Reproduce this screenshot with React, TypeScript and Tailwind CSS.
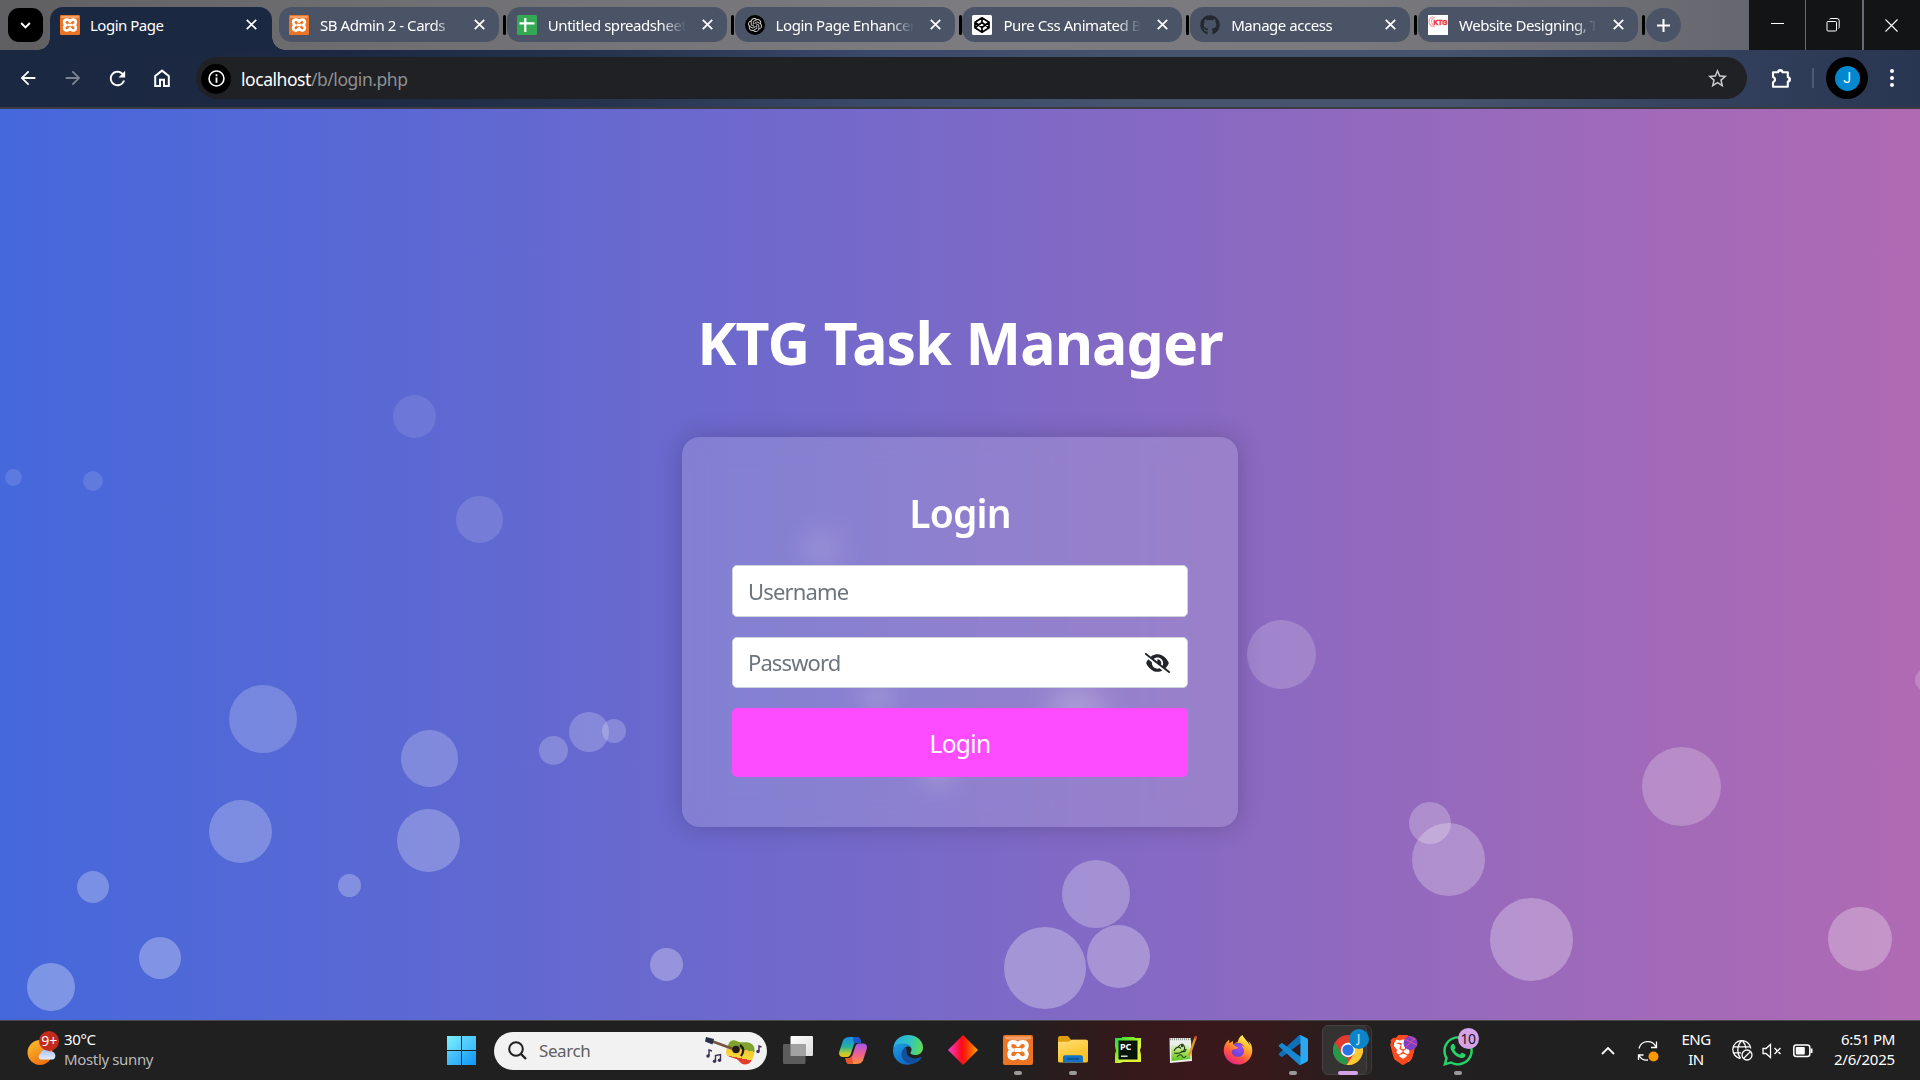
import React from "react";
import { FaGithub, FaWhatsapp, FaFirefoxBrowser } from "react-icons/fa";
import { FaEyeSlash } from "react-icons/fa6";
import { SiOpenai, SiBrave } from "react-icons/si";
import { MdArrowBack, MdArrowForward, MdRefresh, MdStarBorder } from "react-icons/md";

type Bubble = [x: number, y: number, d: number];

const bubbles: Bubble[] = [
  [414.5, 416, 43], [13.5, 477.5, 17], [93, 480.5, 20], [479.5, 519.5, 47],
  [263, 719, 68], [429.5, 758.5, 57], [553.5, 750.5, 29], [589, 731.5, 40],
  [614, 731, 24], [240.5, 831.5, 63], [428.5, 840.5, 63], [93, 887, 32],
  [349.5, 885.5, 23], [160, 958, 42], [51, 987, 48], [666, 964.5, 33],
  [1281.5, 654.5, 69], [1681.5, 786.5, 79], [1430, 823, 42], [1448.5, 859.5, 73],
  [1531.5, 939.5, 83], [1860, 939, 64], [1926, 680, 22], [1096, 894, 68],
  [1118.5, 956.5, 63], [1045, 968, 82], [821, 549, 36], [877, 697, 30],
  [1077, 713, 58], [938, 771, 30],
];

function Xampp({ className }: { className: string }) {
  return (
    <svg viewBox="0 0 30 30" className={className}>
      <rect width="30" height="30" rx="2" fill="#ec7525" />
      <path d="M2 1.500h26v2.500q-13 2-26 0z" fill="#f3a06a" />
      <path
        d="M15 10C13 5.500 6 6 6.300 11c.1 2 1.200 3.400 3 4-2 .8-3.200 2.400-3 4.500C6.600 24.500 13 24.500 15 20c2 4.500 8.400 4.500 8.700-.5.200-2.100-1-3.700-3-4.500 1.800-.6 2.900-2 3-4C24 6 17 5.500 15 10zM11.500 15h7"
        fill="none"
        stroke="#fff"
        strokeWidth="4"
        strokeLinejoin="round"
      />
    </svg>
  );
}

function SheetIcon() {
  return (
    <svg viewBox="0 0 20 20" className="size-5">
      <rect width="20" height="20" rx="1.5" fill="#34a853" />
      <path d="M2.5 8.3h15M8.3 3v14" stroke="#fff" strokeWidth="2.2" />
    </svg>
  );
}

function CodepenIcon() {
  return (
    <svg viewBox="0 0 20 20" className="size-5">
      <rect width="20" height="20" rx="1.500" fill="#fff" />
      <path
        d="M10 2.800l7 4.500v5.400l-7 4.500-7-4.500V7.300zM10 2.800v4.700M10 12.500v4.700M3 7.300l7 5.200 7-5.200M3 12.700l7-5.200 7 5.200"
        fill="none"
        stroke="#000"
        strokeWidth="1.700"
        strokeLinejoin="round"
      />
    </svg>
  );
}

function KtgIcon() {
  return (
    <svg viewBox="0 0 20 20" className="size-5">
      <rect width="20" height="20" fill="#fff" />
      <path d="M5 1.5Q1 3 1 6.500T5 12M7 2Q3 4 3.500 7T7 12" stroke="#f9a9a9" strokeWidth="1.300" fill="none" />
      <text x="5.500" y="10" fontSize="8" fontWeight="900" fill="#f2323a" stroke="#f2323a" strokeWidth=".5" fontFamily="Liberation Sans, sans-serif" textLength="14" lengthAdjust="spacingAndGlyphs">KTG</text>
    </svg>
  );
}

const tabs: { title: string; icon: React.ReactNode }[] = [
  { title: "SB Admin 2 - Cards", icon: <Xampp className="size-5" /> },
  { title: "Untitled spreadsheet", icon: <SheetIcon /> },
  {
    title: "Login Page Enhancement",
    icon: (
      <span className="flex size-5 items-center justify-center rounded-full bg-black">
        <SiOpenai className="size-[14px] text-[#d5d5d5]" />
      </span>
    ),
  },
  { title: "Pure Css Animated Background", icon: <CodepenIcon /> },
  { title: "Manage access", icon: <FaGithub className="size-5 text-[#24292f]" /> },
  { title: "Website Designing, Training", icon: <KtgIcon /> },
];

function Cross() {
  return (
    <svg viewBox="0 0 10 10" className="size-[11px] shrink-0">
      <path d="M.7.7l8.600 8.600M9.300.7L.7 9.300" stroke="#fff" strokeWidth="1.600" />
    </svg>
  );
}

function TabStrip() {
  return (
    <div className="flex h-[50px] bg-[linear-gradient(90deg,#5f5e61_0%,#6c6b6e_15%,#747377_30%,#7c7b80_50%,#7a797e_70%,#6d6e74_85%,#65676e_91%)]">
      <div className="flex w-[50px] pl-2 pt-2">
        <button className="flex h-[34px] w-[35px] items-center justify-center rounded-[11px] bg-black">
          <svg viewBox="0 0 12 8" className="h-[7px] w-[11px]">
            <path d="M1 1.200l5 5 5-5" fill="none" stroke="#fff" strokeWidth="2.200" />
          </svg>
        </button>
      </div>
      <div className="relative mt-[7px] flex h-[43px] w-[222px] items-start rounded-t-[13px] bg-[#1b2841] pl-[10px] pt-2">
        <span className="absolute -left-3 bottom-0 size-3 bg-[radial-gradient(circle_at_0_0,transparent_11.500px,#1b2841_12px)]" />
        <span className="absolute -right-[13px] bottom-0 size-[13px] bg-[radial-gradient(circle_at_100%_0,transparent_12.500px,#1b2841_13px)]" />
        <Xampp className="size-5" />
        <span className="ml-[10px] w-[156px] text-[15px] leading-5 tracking-[-0.500px] text-white">Login Page</span>
        <span className="mt-1"><Cross /></span>
      </div>
      <div className="ml-[7px] flex items-start pt-[7px]">
        {tabs.map((t) => (
          <div key={t.title} className="flex w-[227.800px] items-center">
            <div className="flex h-[35px] w-[220px] items-center rounded-[13px] bg-[#4b5466] pl-[10px]">
              <span className="shrink-0">{t.icon}</span>
              <span className="ml-[11px] w-[138px] overflow-hidden whitespace-nowrap text-[15px] leading-5 tracking-[-0.450px] text-white [mask-image:linear-gradient(90deg,#000_82%,transparent)]">
                {t.title}
              </span>
              <span className="ml-[16px]"><Cross /></span>
            </div>
            <span className="ml-[4px] h-5 w-[3px] rounded-sm bg-black" />
          </div>
        ))}
      </div>
      <div className="mt-2 flex h-[34px] w-[35px] items-center justify-center rounded-full bg-[#4b5466]">
        <svg viewBox="0 0 14 14" className="size-[13px]"><path d="M7 0v14M0 7h14" stroke="#fff" strokeWidth="2.200" /></svg>
      </div>
      <div className="ml-auto flex w-[171px] gap-px bg-[#6a6c73]">
        <div className="flex w-[56px] items-center justify-center bg-[#131416]">
          <span className="mt-[-3px] h-px w-[13px] bg-white" />
        </div>
        <div className="flex w-[56px] items-center justify-center bg-[#131416] pr-[2px]">
          <svg viewBox="0 0 14 14" className="size-[14px]" fill="none" stroke="#fff">
            <rect x="1" y="3.500" width="9.500" height="9.500" rx="1" />
            <path d="M3.500 1.200Q4 .5 5 .5h6q2.200 0 2.200 2.200v6q0 1.300-.8 1.800" />
          </svg>
        </div>
        <div className="ml-px flex flex-1 items-center justify-center bg-[#131416] pr-[2px]">
          <svg viewBox="0 0 13 13" className="size-[13px]"><path d="M.5.5l12 12M12.500.5l-12 12" stroke="#fff" strokeWidth="1.100" /></svg>
        </div>
      </div>
    </div>
  );
}

function Toolbar() {
  return (
    <div className="h-[59px] border-b-2 border-[#3b3b40] bg-[linear-gradient(90deg,#1b2841_0%,#1d2944_18%,#26344f_32%,#394968_45%,#46546f_60%,#46546f_75%,#35425f_88%,#293651_100%)]">
      <div className="flex h-full items-center pb-px text-white">
        <div className="flex w-[196px] items-center">
          <MdArrowBack className="ml-[17px] size-[22px]" />
          <MdArrowForward className="ml-[23px] size-[22px] text-[#7c8392]" />
          <MdRefresh className="ml-[22px] size-[23px]" />
          <svg viewBox="0 0 16 18" className="ml-[25px] h-[18px] w-4" fill="none" stroke="#fff" strokeWidth="2">
            <path d="M1.200 7L8 1.600 14.800 7v10H10v-6.200H6V17H1.200z" />
          </svg>
        </div>
        <div className="flex h-[42px] w-[1551px] items-center rounded-full bg-[#202124] pl-[5px] pr-[18px] pt-px">
          <span className="flex size-[30px] items-center justify-center rounded-full bg-black">
            <svg viewBox="0 0 16 16" className="size-[17px]" fill="none" stroke="#fff" strokeWidth="1.500">
              <circle cx="8" cy="8" r="7" />
              <path d="M8 7v5M8 4v1.800" strokeWidth="1.700" />
            </svg>
          </span>
          <span className="ml-[10px] text-[17.500px] leading-6 tracking-[-0.450px] text-white">
            localhost<span className="text-[#8e9094]">/b/login.php</span>
          </span>
          <MdStarBorder className="ml-auto size-[23px] text-[#c9cacc]" />
        </div>
        <svg viewBox="0 0 21 21" className="ml-6 size-[21px]">
          <path d="M2 4.200h5.200a2.100 2.100 0 0 1 4.200 0h5.400v5.100a2.100 2.100 0 0 1 0 4.200v5.300H2v-4.600a2.700 2.700 0 0 0 0-5.200z" fill="none" stroke="#fff" strokeWidth="2.100" strokeLinejoin="round" />
          <path d="M7.300 3.700a2 2 0 0 1 4 0zM17.300 9.500a2 2 0 0 1 0 4z" fill="#fff" />
        </svg>
        <span className="ml-[20px] h-5 w-[2px] bg-[#4f5a72]" />
        <span className="ml-3 flex size-[42px] items-center justify-center rounded-full bg-black">
          <span className="flex size-[25px] items-center justify-center rounded-full bg-[#0288d1] pb-px font-['Roboto',sans-serif] text-[14px] leading-none">J</span>
        </span>
        <span className="ml-[22px] flex flex-col gap-[3px]">
          <i className="size-1 rounded-full bg-white" />
          <i className="size-1 rounded-full bg-white" />
          <i className="size-1 rounded-full bg-white" />
        </span>
      </div>
    </div>
  );
}

function LoginPage() {
  return (
    <main className="relative h-[911px] overflow-hidden bg-[linear-gradient(90deg,#4568dc,#b06ab3)]">
      {bubbles.map(([x, y, d]) => (
        <span
          key={`${x}-${y}`}
          className="absolute rounded-full bg-white"
          style={{ left: x - d / 2, top: y - 109 - d / 2, width: d, height: d, opacity: 0.1 + (y - 416) * 0.00035 }}
        />
      ))}
      <div className="relative flex flex-col items-center pt-[197px]">
        <h1 className="text-[59px] font-bold leading-[72px] tracking-[-0.900px] text-white">KTG Task Manager</h1>
        <form className="mt-[59px] flex h-[390px] w-[556px] flex-col rounded-[18px] bg-[#f4f4f4]/[0.17] px-[50px] pt-[52px] shadow-[0_0_25px_rgba(0,0,0,0.2)] backdrop-blur-[12px]">
          <h2 className="text-center text-[39px] font-semibold leading-[48px] tracking-[-0.800px] text-white">Login</h2>
          <input
            className="mt-[28px] h-[52px] w-full rounded-[5px] border border-[#ced4da] bg-white px-[15px] text-[22px] tracking-[-0.850px] placeholder:text-[#6c757d]"
            placeholder="Username"
          />
          <div className="mt-5 flex h-[51px] items-center rounded-[5px] border border-[#ced4da] bg-white pl-[15px] pr-[17px]">
            <input className="min-w-0 flex-1 bg-transparent text-[22px] tracking-[-0.900px] placeholder:text-[#6c757d]" placeholder="Password" />
            <FaEyeSlash className="h-5 w-[25px] text-[#212529]" />
          </div>
          <button type="button" className="mt-5 h-[69px] rounded-[5px] bg-[#fd4bff] pt-[3px] text-[24.500px] tracking-[-0.600px] text-white">
            Login
          </button>
        </form>
      </div>
    </main>
  );
}

function Weather() {
  return (
    <svg viewBox="0 0 34 36" className="-mt-1 h-9 w-[34px]">
      <defs>
        <linearGradient id="sun" x1="0" y1="0" x2=".6" y2="1"><stop stopColor="#f9c22e" /><stop offset="1" stopColor="#f0700f" /></linearGradient>
        <linearGradient id="cloud" x1="0" y1="0" x2="0" y2="1"><stop stopColor="#a9c3f5" /><stop offset="1" stopColor="#e3ecfc" /></linearGradient>
      </defs>
      <circle cx="13" cy="21.500" r="12.500" fill="url(#sun)" />
      <path d="M13 28.500a3.600 3.600 0 0 1 .5-6 5 5 0 0 1 9-1.500 4 4 0 0 1 3.500 7.500z" fill="url(#cloud)" />
      <circle cx="22" cy="10" r="10" fill="#c42b1c" />
      <text x="22.200" y="15" textAnchor="middle" fontSize="14" fill="#fff" fontFamily="Noto Sans, sans-serif">9+</text>
    </svg>
  );
}

function Guitar() {
  return (
    <svg viewBox="0 0 57 30" className="h-[30px] w-[57px]">
      <defs>
        <linearGradient id="gtr" x1=".35" y1="0" x2="0.100" y2="1">
          <stop offset=".3" stopColor="#7fa32c" /><stop offset=".3" stopColor="#f2c92e" /><stop offset=".66" stopColor="#f7d63c" /><stop offset=".66" stopColor="#e03e2d" />
        </linearGradient>
      </defs>
      <path d="M24 7c2-4 6-3 9-1.500s8 0 12 1.500c5 2 5 7 4 11.500-1 5-4 10-9 10s-5-4.500-10-6-10-3-9-7 2-6 3-8.500z" fill="url(#gtr)" />
      <path d="M5 4.500l26 9.500" stroke="#77553f" strokeWidth="2.800" />
      <path d="M1 1l8 2-1.500 5.500L0 5.500z" fill="#28304a" />
      <circle cx="31" cy="13.500" r="3.800" fill="#241c1c" />
      <path d="M35 9c4 3 4 7 1 11" stroke="#241c1c" strokeWidth="2.200" fill="none" />
      <path d="M4 20v-6l3 1M10.500 25v-5.500l5-1V24M54 15v-5l2.500 1" stroke="#3b2e52" strokeWidth="1.400" fill="none" />
      <g fill="#3b2e52"><circle cx="3" cy="20" r="1.700" /><circle cx="9.500" cy="25.300" r="1.700" /><circle cx="14.500" cy="24.300" r="1.700" /><circle cx="53" cy="15.500" r="1.700" /></g>
    </svg>
  );
}

function TaskView() {
  return (
    <svg viewBox="0 0 30 28" className="h-7 w-[30px]">
      <defs><linearGradient id="tv" x1="0" y1="0" x2="1" y2="1"><stop stopColor="#fff" /><stop offset="1" stopColor="#dcdcdc" /></linearGradient></defs>
      <rect x="7.500" y="0" width="22.500" height="20" rx="1" fill="url(#tv)" />
      <rect x="0" y="8" width="22.500" height="20" rx="1" fill="#5c5c5c" />
      <rect x="7.500" y="8" width="15" height="12" fill="#a2a2a2" />
    </svg>
  );
}

function Copilot() {
  return (
    <svg viewBox="0 0 28 27" className="h-[27px] w-7">
      <defs>
        <linearGradient id="cpa" x1="0" y1="0" x2="0" y2="1"><stop stopColor="#1a8fe8" /><stop offset=".5" stopColor="#25b39a" /><stop offset=".8" stopColor="#b7cc33" /><stop offset="1" stopColor="#f3c315" /></linearGradient>
        <linearGradient id="cpb" x1="0" y1="0" x2="0" y2="1"><stop stopColor="#a457ef" /><stop offset=".5" stopColor="#ee5f94" /><stop offset="1" stopColor="#fb8f3c" /></linearGradient>
      </defs>
      <path d="M11 0h7q2.500 0 3.300 2.500l.9 3H18q-2.500 0-3.300 2.600l-3 9Q10.800 20 8 20H4Q-.8 20 .3 14.500L4 3.500Q5.500 0 11 0z" fill="url(#cpa)" />
      <path d="M14 0h4q2.500 0 3.300 2.500l.9 3H18q-2 0-3 2z" fill="#1d55cf" />
      <path d="M17 27h-6.500q-2.500 0-3.300-2.500L6.300 21H10q2.500 0 3.300-2.600l3-9Q17.200 6.500 20 6.500h4q4.800 0 3.700 5.500L24 23.500Q22.500 27 17 27z" fill="url(#cpb)" />
      <path d="M14 27h-3.500q-2.500 0-3.300-2.500L6.300 21H10q2 0 3-2z" fill="#e9572e" />
    </svg>
  );
}

function EdgeLogo() {
  return (
    <svg viewBox="0 0 30 30" className="size-[30px]">
      <defs>
        <linearGradient id="ea" x1="0" y1=".3" x2="1" y2=".5"><stop stopColor="#2aa9e6" /><stop offset=".55" stopColor="#2fc5c0" /><stop offset="1" stopColor="#62dc55" /></linearGradient>
        <linearGradient id="eb" x1="0" y1="0" x2=".6" y2="1"><stop stopColor="#1b9de2" /><stop offset="1" stopColor="#1167c4" /></linearGradient>
      </defs>
      <path d="M.3 13C1 5 7.500 0 15 0c9 0 15 6 15 12.500 0 5-3.500 7.500-7.500 7.500-3.500 0-5.500-1.400-5-2.500.8-1 1-2 1-3 0-3-3-5.500-7-5.500-5 0-9 2-11.200 4z" fill="url(#ea)" />
      <path d="M0 15C.3 11 5 8.500 10.500 8.500c4.500 0 8 2.500 8 6 0-2-2-3.300-4-3-3 .5-5 4-4.300 8C11.500 25 17 27.500 24 25.500 20 29.500 15 30.500 10.500 29.300 4 27.500 0 22 0 15z" fill="url(#eb)" />
      <path d="M12.500 12.300c-4 2.500-5.500 8-2 12.500s10 5 14.500 2c1.700-1.200 3-2.700 3.600-4 .3-.7-.2-1-.8-.7-5.500 2.800-13 1.200-14-4.600-.3-2 0-3.700-1.300-5.200z" fill="#124f9c" />
    </svg>
  );
}

function Diamond() {
  return (
    <svg viewBox="0 0 30 30" className="size-[30px]">
      <defs><linearGradient id="dm"><stop stopColor="#f63fd0" /><stop offset=".45" stopColor="#fb0a1c" /><stop offset=".6" stopColor="#fc2a05" /><stop offset="1" stopColor="#fda305" /></linearGradient></defs>
      <path d="M15 0l15 15-15 15L0 15z" fill="url(#dm)" />
    </svg>
  );
}

function Folder() {
  return (
    <svg viewBox="0 0 30 28" className="-mt-px h-[27px] w-[30px]" preserveAspectRatio="none">
      <defs><linearGradient id="fd" x1="0" y1="0" x2="0.500" y2="1"><stop stopColor="#ffdd76" /><stop offset="1" stopColor="#fbbf1e" /></linearGradient></defs>
      <path d="M0 2Q0 0 2 0h8l3 4h15q2 0 2 2v6H0z" fill="#dd9d0c" />
      <path d="M0 6h9q2 0 3-1t3-1h13q2 0 2 2v20q0 1.500-1.500 1.500h-27Q0 27.500 0 26z" fill="url(#fd)" />
      <path d="M5 27.500V22q0-2 2-2h16q2 0 2 2v5.500z" fill="#1272c4" />
      <path d="M9 23.800h12" stroke="#0b4c8c" strokeWidth="1.500" />
    </svg>
  );
}

function PyCharm() {
  return (
    <svg viewBox="0 0 26 26" className="size-[26px]">
      <defs><linearGradient id="pc" x1="0" y1="0" x2="1" y2="1"><stop stopColor="#21d749" /><stop offset=".35" stopColor="#7be82a" /><stop offset=".6" stopColor="#d9f53b" /><stop offset="1" stopColor="#e9ee35" /></linearGradient></defs>
      <path d="M0 1h7V0h12l1 1h6v9l-1 3 1 5v7H8l-3 1H0v-9l1-3-1-5z" fill="url(#pc)" />
      <rect x="3.500" y="3.500" width="19" height="19" fill="#06140c" />
      <text x="5" y="12.500" fontSize="9" fontWeight="700" fill="#fff" fontFamily="Noto Sans, sans-serif">PC</text>
      <path d="M6 19.200h6.500" stroke="#fff" strokeWidth="1.300" />
    </svg>
  );
}

function NotepadPP() {
  return (
    <svg viewBox="0 0 28 28" className="size-[28px]">
      <defs><linearGradient id="np" x1="0" y1="0" x2="0" y2="1"><stop stopColor="#eef4ea" /><stop offset=".5" stopColor="#a5df5c" /><stop offset="1" stopColor="#5fc322" /></linearGradient></defs>
      <path d="M.5 2h21.500l1 23L1 27z" fill="#eceeec" />
      <path d="M1 3.200h21" stroke="#8f9690" strokeWidth="2" strokeDasharray="1 1" />
      <path d="M2 9L20 7.500l1.500 15.500L2.500 25z" fill="url(#np)" />
      <path d="M5 15q3-6 7-2.500M9 11q4-5 6-1t-2 6-8 1M12 15q5 2 5-2M8 21q3-4 5-1t4 0" fill="none" stroke="#27401a" strokeWidth="1.200" />
      <circle cx="13" cy="10" r="1.200" fill="#27401a" />
      <path d="M26.500 1.500L20 20" stroke="#e29b25" strokeWidth="2.300" />
      <path d="M27.200 0l-1 3" stroke="#c24c3a" strokeWidth="2.300" />
    </svg>
  );
}

function Firefox() {
  return (
    <span className="relative block size-[30px]">
      <svg viewBox="0 0 30 30" className="size-[30px]">
        <defs>
          <linearGradient id="ffx" x1=".8" y1="0" x2=".25" y2="1"><stop offset=".1" stopColor="#fff04a" /><stop offset=".4" stopColor="#ffa02a" /><stop offset=".7" stopColor="#ff4f45" /><stop offset="1" stopColor="#e3208a" /></linearGradient>
          <radialGradient id="ffp" cx=".6" cy=".3" r=".7"><stop stopColor="#a04cf2" /><stop offset="1" stopColor="#5a3fd0" /></radialGradient>
        </defs>
        <circle cx="15" cy="16" r="8" fill="url(#ffp)" />
      </svg>
      <FaFirefoxBrowser className="absolute inset-0 size-[30px]" fill="url(#ffx)" />
    </span>
  );
}

function VsCode() {
  return (
    <svg viewBox="0 0 100 100" className="size-[30px]">
      <path d="M96 11L75.500 1a6 6 0 0 0-7 1.200L4 61a4 4 0 0 0 0 6l5.500 5a4 4 0 0 0 5.300.2L94 13.500A4 4 0 0 1 100 16.500V16a6 6 0 0 0-4-5z" fill="#0e70b8" />
      <path d="M96 89L75.500 99a6 6 0 0 1-7-1.200L4 39a4 4 0 0 1 0-6l5.500-5a4 4 0 0 1 5.300-.2L94 86.500a4 4 0 0 0 6-3V84a6 6 0 0 1-4 5z" fill="#1687d0" />
      <path d="M75.500 99a6 6 0 0 1-7-1.200c2.300 2.300 6.300.7 6.300-2.600V4.800c0-3.300-4-4.900-6.300-2.600a6 6 0 0 1 7-1.200L96 11a6 6 0 0 1 4 5.500v67a6 6 0 0 1-4 5.500z" fill="#2ba8f2" />
    </svg>
  );
}

function Chrome() {
  return (
    <span className="relative block size-[30px]">
      <svg viewBox="0 0 30 30" className="size-[30px]">
        <circle cx="15" cy="15" r="15" fill="#e33b2e" />
        <path d="M2 7.500L8.500 18.700A7.500 7.500 0 0 0 15 22.500l-1.500 7.400A15 15 0 0 1 2 7.500z" fill="#239a4c" />
        <path d="M15 7.500h13a15 15 0 0 1-14.500 22.400L21 19z" fill="#fcc934" />
        <circle cx="15" cy="15" r="7.200" fill="#fff" />
        <circle cx="15" cy="15" r="5.600" fill="#2a72e8" />
      </svg>
      <span className="absolute -right-[6px] -top-[6px] flex size-5 items-center justify-center rounded-full bg-[#0b84c9] text-[12px] font-semibold leading-none text-[#a8d8f4]">J</span>
    </span>
  );
}

function Brave() {
  return (
    <span className="relative left-px block h-[30px] w-[27px]">
      <svg viewBox="0 0 27 30" className="h-[30px] w-[27px]">
        <path d="M5 4h15l4 12-4 10-7 3-6-4-4-12z" fill="#fff" />
      </svg>
      <SiBrave className="absolute -left-[2px] top-0 size-[30px] text-[#fb4a1d]" />
      <svg viewBox="0 0 15 15" className="absolute -right-px top-0 size-[15px]">
        <circle cx="7.500" cy="8" r="7" fill="#7d3fc6" />
        <path d="M1 4l13 6M3 12l9-9M6 1l6 4" stroke="#e4508f" strokeWidth="1" />
      </svg>
    </span>
  );
}

function WhatsApp() {
  return (
    <span className="relative block size-[30px]">
      <FaWhatsapp className="-ml-[2px] -mt-[2px] size-[34px] text-[#25d366]" />
      <span className="absolute -right-[6px] -top-[6px] flex size-[21px] items-center justify-center rounded-full bg-[#d5a3e8] text-[14px] leading-none tracking-[-0.500px] text-[#1d1420]">10</span>
    </span>
  );
}

const apps: { name: string; icon: React.ReactNode; running?: boolean; active?: boolean }[] = [
  { name: "task-view", icon: <TaskView /> },
  { name: "copilot", icon: <Copilot /> },
  { name: "edge", icon: <EdgeLogo /> },
  { name: "diamond", icon: <Diamond /> },
  { name: "xampp", icon: <Xampp className="size-[30px]" />, running: true },
  { name: "explorer", icon: <Folder />, running: true },
  { name: "pycharm", icon: <PyCharm /> },
  { name: "notepad", icon: <NotepadPP /> },
  { name: "firefox", icon: <Firefox /> },
  { name: "vscode", icon: <VsCode />, running: true },
  { name: "chrome", icon: <Chrome />, active: true },
  { name: "brave", icon: <Brave /> },
  { name: "whatsapp", icon: <WhatsApp />, running: true },
];

function Tray() {
  return (
    <div className="ml-auto flex h-full items-center pr-[25px] text-[15px] leading-5 text-white">
      <svg viewBox="0 0 14 8" className="h-2 w-[14px]"><path d="M1 7l6-6 6 6" fill="none" stroke="#fff" strokeWidth="1.800" /></svg>
      <svg viewBox="0 0 22 22" className="ml-[22px] size-[22px]" fill="none" stroke="#fff" strokeWidth="1.300">
        <path d="M2 8.500A9 9 0 0 1 19 7M19.500 1.500V7.500H14M1.500 20v-5h5M2 15.500a9 9 0 0 0 9 4.500" />
        <circle cx="16.500" cy="16.500" r="5" fill="#ff9800" stroke="none" />
      </svg>
      <div className="-mt-[3px] ml-[22px] w-[30px] text-center tracking-[-0.500px]"><div>ENG</div><div>IN</div></div>
      <svg viewBox="0 0 21 21" className="ml-[21px] size-[21px]" fill="none" stroke="#fff" strokeWidth="1.300">
        <path d="M8.500 18.500A9 9 0 1 1 18.800 8.500M9.500 1C4.500 6 5 14 8.500 18.500M10.500 1q3 3 3.500 7.500M1.500 6.800h16.500M1.500 12.800h7.500" />
        <circle cx="15" cy="15" r="5" />
        <path d="M11.500 18.500l7-7" />
      </svg>
      <svg viewBox="0 0 20 16" className="ml-[9px] h-4 w-5" fill="none" stroke="#fff" strokeWidth="1.300">
        <path d="M1 5.500h3l4.500-4v13L4 10.500H1zM12.500 5l6 6M18.500 5l-6 6" />
      </svg>
      <svg viewBox="0 0 20 14" className="ml-[11px] h-[14px] w-5">
        <rect x=".8" y="1" width="16" height="11.500" rx="2.500" fill="none" stroke="#fff" strokeWidth="1.500" />
        <rect x="2.800" y="3" width="9" height="7.500" rx="1" fill="#fff" />
        <path d="M18.500 4.500v4.500" stroke="#fff" strokeWidth="2" />
      </svg>
      <div className="-mt-[4px] w-[82px] text-right tracking-[-0.350px]"><div>6:51 PM</div><div className="tracking-[-0.200px]">2/6/2025</div></div>
    </div>
  );
}

function Taskbar() {
  return (
    <footer className="flex h-[60px] items-center border-t border-[#48484a] bg-[linear-gradient(90deg,#202020_0%,#202020_52%,#33191b_58%,#3a181b_62%,#36191b_66%,#222020_72%,#202020_100%)]">
      <div className="flex w-[447px] items-center pl-[27px]">
        <Weather />
        <div className="-mt-[4px] ml-[3px] text-[15px] leading-5 tracking-[-0.350px] text-white">
          <div>30°C</div>
          <div className="text-[#b9b9b9]">Mostly sunny</div>
        </div>
      </div>
      <div className="grid size-[29px] grid-cols-2 gap-px">
        <i className="bg-[linear-gradient(135deg,#7af0ff,#55cdfb)]" />
        <i className="bg-[linear-gradient(135deg,#5fd6fc,#3bbcfb)]" />
        <i className="bg-[linear-gradient(135deg,#56cdfb,#2aa9fa)]" />
        <i className="bg-[linear-gradient(135deg,#3bb9fb,#0f96f8)]" />
      </div>
      <div className="ml-[18px] flex h-[38px] w-[273px] items-center rounded-full bg-[#f2f2f2] pl-[14px] pr-[5px]">
        <svg viewBox="0 0 19 19" className="size-[19px]" fill="none" stroke="#222" strokeWidth="2">
          <circle cx="8" cy="8" r="6.800" />
          <path d="M13 13l5 5" strokeWidth="2.400" />
        </svg>
        <span className="ml-[12px] text-[17px] tracking-[-0.400px] text-[#606060]">Search</span>
        <span className="ml-auto"><Guitar /></span>
      </div>
      <div className="ml-[3px] flex h-full pb-px">
        {apps.map((a) => (
          <div key={a.name} className="relative flex w-[55px] items-center justify-center">
            {a.active && (
              <>
                <span className="absolute left-[4px] top-1 h-[50px] w-[48px] rounded-[6px] border border-[#3d3a3a] bg-[#2c2929]" />
                <span className="absolute left-[2px] top-1 h-[50px] w-[45px] rounded-[6px] border border-[#454242] bg-[#353232]" />
              </>
            )}
            <span className="relative">{a.icon}</span>
            {a.running && <span className="absolute bottom-[4px] h-1 w-2 rounded-full bg-[#9a9a9a]" />}
            {a.active && <span className="absolute bottom-[4px] h-1 w-5 rounded-full bg-[#d5a3e8]" />}
          </div>
        ))}
      </div>
      <Tray />
    </footer>
  );
}

export default function App() {
  return (
    <div className="flex h-[1080px] w-[1920px] flex-col overflow-hidden bg-black font-['Noto_Sans',sans-serif]">
      <TabStrip />
      <Toolbar />
      <LoginPage />
      <Taskbar />
    </div>
  );
}
